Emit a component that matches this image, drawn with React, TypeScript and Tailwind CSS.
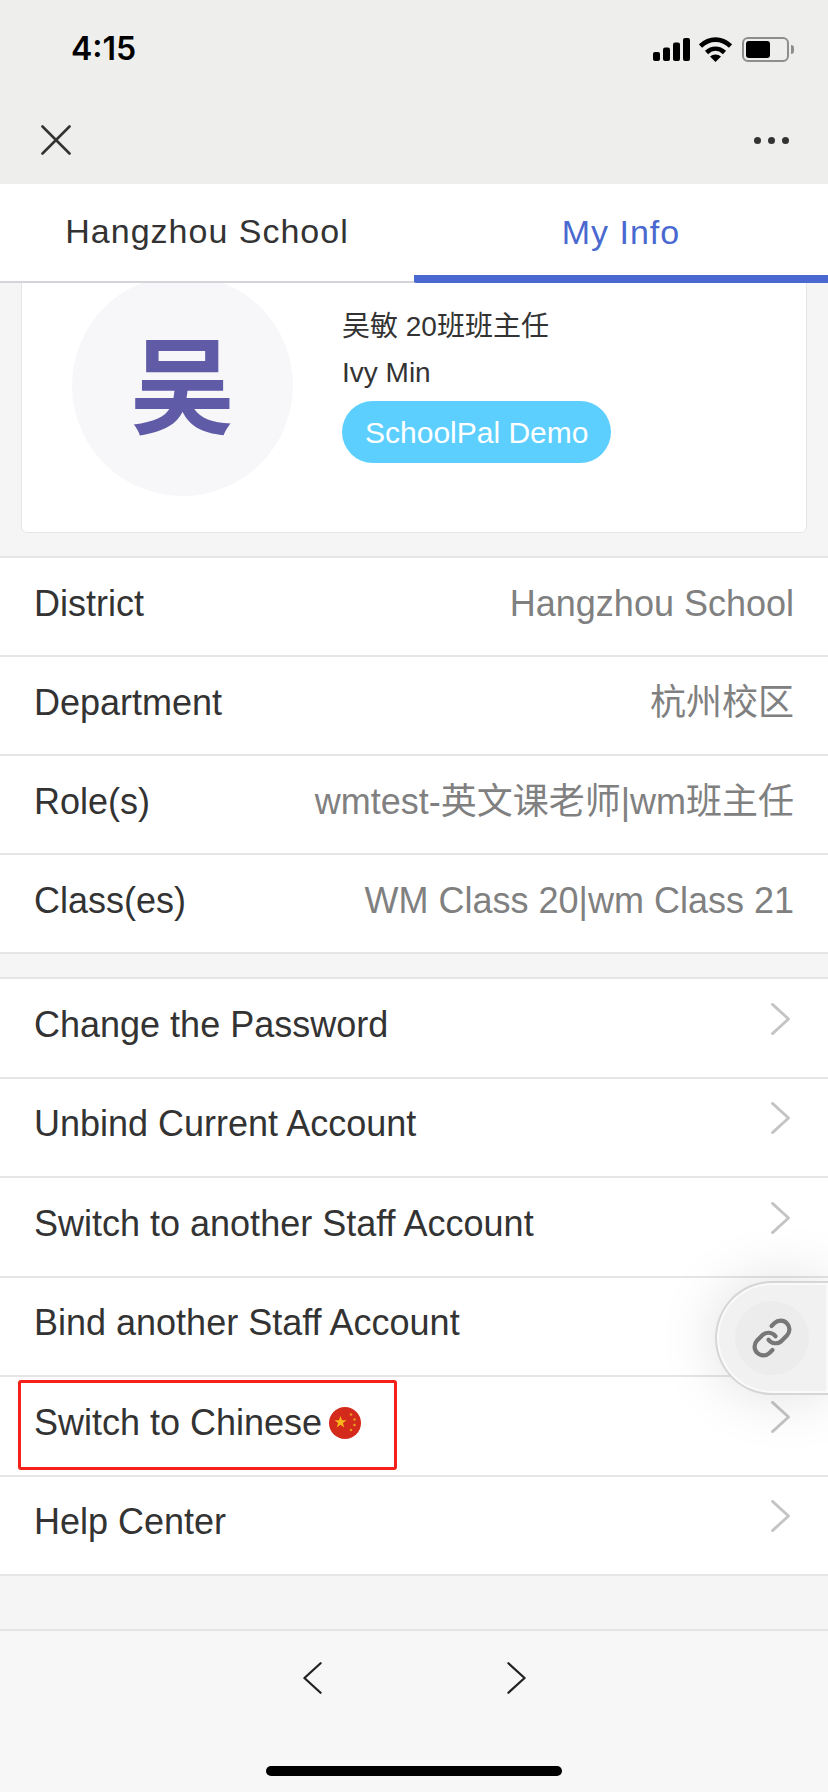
import React from 'react';
import { Link } from 'lucide-react';

const sans = "font-['Liberation_Sans','Noto_Sans_CJK_SC',sans-serif]";

const infoRows = [
  { label: 'District', value: 'Hangzhou School' },
  { label: 'Department', value: '杭州校区' },
  { label: 'Role(s)', value: 'wmtest-英文课老师|wm班主任' },
  { label: 'Class(es)', value: 'WM Class 20|wm Class 21' },
];

const menuRows = [
  'Change the Password',
  'Unbind Current Account',
  'Switch to another Staff Account',
  'Bind another Staff Account',
  'Switch to Chinese',
  'Help Center',
];

const Chevron = ({ className, flip, width = 2.4 }: { className: string; flip?: boolean; width?: number }) => (
  <svg viewBox="0 0 20 34" fill="none" stroke="currentColor" strokeWidth={width} strokeLinecap="round" strokeLinejoin="round" className={className}>
    <path d={flip ? 'M18.500 1.500 1.500 17l17 15.500' : 'M1.500 1.500 18.500 17 1.500 32.500'} />
  </svg>
);

const StatusIcons = () => (
  <div className="flex items-center">
    <svg width="37" height="23" viewBox="0 0 37 23" fill="black">
      <rect x="0" y="14" width="7" height="9" rx="2" />
      <rect x="10" y="9.500" width="7" height="13.500" rx="2" />
      <rect x="20" y="4.500" width="7" height="18.500" rx="2" />
      <rect x="30" y="0" width="7" height="23" rx="2" />
    </svg>
    <svg width="33" height="25" viewBox="0 0 33 25" fill="none" stroke="black" strokeWidth="4.600" className="ml-[9px]">
      <path d="M1.500 9c9-8.500 21-8.500 30 0" />
      <path d="M7.500 15.500c5.500-5 12.500-5 18 0" />
      <path d="M16.500 25 11 19.500c3-2.700 8-2.700 11 0z" fill="black" stroke="none" />
    </svg>
    <div className="ml-[10px] flex items-center">
      <div className="flex h-[25px] w-[47px] items-center rounded-[6px] border-2 border-[#8e8e8e] p-[2px]">
        <div className="h-full w-[24px] rounded-[3px] bg-black" />
      </div>
      <div className="ml-[2px] h-[9px] w-[3px] rounded-r-full bg-[#8e8e8e]" />
    </div>
  </div>
);

const Flag = () => (
  <svg width="32" height="32" viewBox="0 0 32 32" className="ml-[7px] mt-[1px] shrink-0">
    <circle cx="16" cy="16" r="16" fill="#d42a1c" />
    <polygon fill="#fbb81c" points="11.500,9 13,13.200 17.500,13.200 13.900,16 15.200,20.500 11.500,17.800 7.800,20.500 9.100,16 5.500,13.200 10,13.200" />
    <circle cx="22" cy="7.500" r="1.300" fill="#e89a1e" />
    <circle cx="25.500" cy="12.500" r="1.300" fill="#e89a1e" />
    <circle cx="25.500" cy="18" r="1.300" fill="#e89a1e" />
    <circle cx="22" cy="23" r="1.300" fill="#e89a1e" />
  </svg>
);

export default function App() {
  return (
    <div className={`relative flex h-[1792px] w-[828px] flex-col overflow-hidden bg-[#f5f5f5] text-[#333] ${sans}`}>
      {/* status bar + webview nav */}
      <div className="h-[184px] shrink-0 bg-[#eeeeed]">
        <div className="flex h-[98px] items-start justify-between pl-[71px] pr-[34px] pt-[28px]">
          <span className="font-['Inter',sans-serif] text-[32px] font-semibold leading-[42px] text-black">4:15</span>
          <div className="pt-[9px]">
            <StatusIcons />
          </div>
        </div>
        <div className="flex items-center justify-between pl-[41px] pr-[39px] pt-[27px]">
          <svg width="30" height="30" viewBox="0 0 30 30" stroke="#333" strokeWidth="2.600" strokeLinecap="round">
            <path d="M1.500 1.500 28.500 28.500M28.500 1.500 1.500 28.500" />
          </svg>
          <div className="flex gap-[7px]">
            <span className="h-[7px] w-[7px] rounded-full bg-[#333]" />
            <span className="h-[7px] w-[7px] rounded-full bg-[#333]" />
            <span className="h-[7px] w-[7px] rounded-full bg-[#333]" />
          </div>
        </div>
      </div>

      {/* tabs */}
      <div className="relative z-10 flex h-[99px] shrink-0 border-b-2 border-[#d4d4da] bg-white text-[34px]">
        <div className="flex w-[414px] items-center justify-center pb-[2px] tracking-[1px]">Hangzhou School</div>
        <div className="-mb-[2px] flex w-[414px] items-center justify-center rounded-l-[2px] border-b-8 border-[#4a69d0] pt-[6px] tracking-[1px] text-[#4a69d0]">My Info</div>
      </div>

      <div className="min-h-0 flex-1 overflow-hidden">
        {/* profile card */}
        <div className="px-[21px] pb-[23px]">
          <div className="-mt-[12px] flex h-[262px] rounded-[6px] border border-[#e6e6e6] bg-white pl-[50px] pt-[3px]">
            <div className="flex h-[221px] w-[221px] shrink-0 items-center justify-center rounded-full bg-[#f7f7f9] pb-[12px] font-['Noto_Sans_CJK_SC',sans-serif] text-[105px] font-bold leading-none text-[#5f5ba7]">吴</div>
            <div className="ml-[49px] flex flex-col items-start pt-[36px]">
              <div className="text-[28px] leading-[32px]">吴敏 20班班主任</div>
              <div className="mt-[14px] text-[28px] leading-[32px]">Ivy Min</div>
              <div className="mt-[12px] flex h-[62px] items-center rounded-full bg-[#5ccfff] px-[23px] text-[30px] text-white">SchoolPal Demo</div>
            </div>
          </div>
        </div>

        <div className="border-t-2 border-[#e5e5e5] bg-white">
          {infoRows.map((row) => (
            <div key={row.label} className="flex h-[99px] items-center justify-between border-b-2 border-[#e5e5e5] pb-[5px] pl-[34px] pr-[34px]">
              <span className="text-[36px]">{row.label}</span>
              <span className="text-[36px] text-[#808080]">{row.value}</span>
            </div>
          ))}
        </div>

        <div className="mt-[23px] border-t-2 border-[#e5e5e5] bg-white">
          {menuRows.map((label) => (
            <div key={label} className="flex h-[99.5px] items-center justify-between border-b-2 border-[#e5e5e5] pb-[6px] pl-[34px] pr-[38px]">
              <span className="flex items-center text-[36px]">
                {label}
                {label === 'Switch to Chinese' && <Flag />}
              </span>
              <Chevron width={3} className="mb-[12px] h-[32px] w-[19px] text-[#c4c4c4]" />
            </div>
          ))}
        </div>
      </div>

      {/* bottom bar */}
      <div className="flex h-[163px] shrink-0 flex-col items-center border-t-2 border-[#e5e5e5] bg-[#f7f7f7]">
        <div className="flex gap-[185px] pt-[30px]">
          <Chevron flip className="h-[34px] w-[19px] text-[#222]" />
          <Chevron className="h-[34px] w-[19px] text-[#222]" />
        </div>
        <div className="mt-[71px] h-[10px] w-[296px] rounded-full bg-black" />
      </div>

      {/* floating link button */}
      <div className="absolute left-[715px] top-[1281px] flex h-[114px] w-[113px] items-center rounded-l-[57px] border-2 border-r-0 border-[#d6d6d6] bg-[#f1f1f1] pl-[18px] shadow-[inset_0_0_0_2px_#fafafa,0_0_60px_rgba(0,0,0,0.13)]">
        <div className="flex h-[74px] w-[74px] items-center justify-center rounded-full bg-[#ececec]">
          <Link size={42} strokeWidth={2.4} className="text-[#777]" />
        </div>
      </div>

      {/* red annotation box */}
      <div className="absolute left-[18px] top-[1380px] h-[90px] w-[379px] rounded-[3px] border-[3px] border-[#f5201a]" />
    </div>
  );
}
